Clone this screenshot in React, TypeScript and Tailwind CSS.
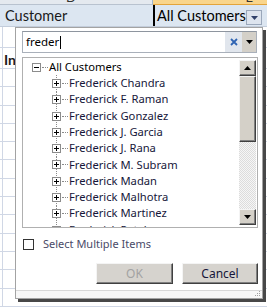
const names = [
  "Frederick Chandra",
  "Frederick F. Raman",
  "Frederick Gonzalez",
  "Frederick J. Garcia",
  "Frederick J. Rana",
  "Frederick M. Subram",
  "Frederick Madan",
  "Frederick Malhotra",
  "Frederick Martinez",
  "Frederick Patel",
];

function TreeBox({ plus }: { plus: boolean }) {
  return (
    <svg width="9" height="9" viewBox="0 0 9 9" className="shrink-0 block">
      <rect x="0.5" y="0.5" width="8" height="8" fill="#fff" stroke="#8c8c8c" />
      <line x1="2" y1="4.5" x2="7" y2="4.5" stroke="#000" />
      {plus && <line x1="4.5" y1="2" x2="4.5" y2="7" stroke="#000" />}
    </svg>
  );
}

function Tri({ up }: { up?: boolean }) {
  return (
    <svg width="7" height="4" viewBox="0 0 7 4" className="block">
      {up ? <polygon points="0,4 7,4 3.5,0" fill="#000" /> : <polygon points="0,0 7,0 3.5,4" fill="#000" />}
    </svg>
  );
}

export default function App() {
  const rowsBelow = Array.from({ length: 13 });
  return (
    <div className="relative w-[267px] h-[307px] overflow-hidden bg-white font-['Lato',sans-serif]">
      {/* Column header strip */}
      <div className="flex h-[5px] overflow-hidden">
        <div className="w-[153px] bg-[#e4e9ef] border-b border-[#b8c2cf] border-r border-r-[#9eb6ce] flex justify-center">
          <span className="text-[13px] leading-[13px] mt-[-9px] ml-[-10px] text-[#333]">D</span>
        </div>
        <div className="flex-1 bg-[#f9d58c] border-b border-[#e3a43b] flex justify-end pr-[14px]">
          <span className="text-[13px] leading-[13px] mt-[-9px] text-[#333]">E</span>
        </div>
      </div>
      {/* Row with cells */}
      <div className="flex h-[22px] border-b border-[#c3cddb]">
        <div className="w-[153px] bg-[#dce6f1] pl-[5px] flex items-center text-[14.5px] text-[#1a1a1a]">Customer</div>
        <div className="flex-1 bg-[#dce6f1] border-l-2 border-black flex items-center pl-[2px] text-[14.5px] text-black">
          <span>All Customers</span>
          <div className="ml-auto mr-[5px] mt-[4px] w-[16px] h-[15px] bg-[#dde4ee] border border-[#9aa7ba] flex items-center justify-center">
            <svg width="7" height="4" viewBox="0 0 7 4"><polygon points="0,0 7,0 3.5,4" fill="#30406a" /></svg>
          </div>
        </div>
      </div>
      {/* Sheet grid below */}
      <div className="flex flex-col">
        <div className="h-[21px] flex border-b border-[#d0d7e5]">
          <div className="w-[3px] border-r border-[#d0d7e5]" />
        </div>
        <div className="h-[21px] flex border-b border-[#d0d7e5]">
          <div className="w-[3px] border-r border-[#d0d7e5]" />
          <span className="pl-[1px] font-bold text-[14px] leading-[21px] text-[#1a1a1a] mt-[1px]">In</span>
        </div>
        {rowsBelow.map((_, i) => (
          <div key={i} className="h-[18.3px] flex border-b border-[#d0d7e5]">
            <div className="w-[3px] border-r border-[#d0d7e5]" />
          </div>
        ))}
      </div>

      {/* Dropdown panel */}
      <div className="absolute left-[15px] top-[27px] w-[248px] h-[272px] bg-white border border-[#a3a3a3] shadow-[3px_3px_0_#484848] flex flex-col font-['Noto_Sans',sans-serif]">
        <div className="pt-[3px] pl-[6px] flex flex-col flex-1">
          {/* Search box */}
          <div className="h-[22px] w-[235px] flex border border-[#a9b0ba] border-t-[#8e959f]">
            <div className="flex-1 bg-white flex items-center pl-[3px] text-[11.5px] text-black">
              <span>freder</span>
              <span className="w-px h-[13px] bg-black ml-[1px]" />
            </div>
            <div className="w-[17px] bg-[#e1e6ed] flex items-center justify-center">
              <svg width="8" height="8" viewBox="0 0 8 8">
                <path d="M1 1 L7 7 M7 1 L1 7" stroke="#2f64b3" strokeWidth="1.8" />
              </svg>
            </div>
            <div className="w-[14px] bg-[#d4d0c8] flex items-center justify-center">
              <Tri />
            </div>
          </div>

          {/* List box */}
          <div className="mt-[4px] w-[236px] h-[171px] border border-[#b0b0b0] bg-white flex overflow-hidden">
            <div className="flex-1 pt-[1px] pl-[9px] overflow-hidden text-[11.2px] text-[#16163a]">
              <div className="h-[16.3px] flex items-center">
                <TreeBox plus={false} />
                <div className="w-[6px] border-t border-dotted border-[#8a8a8a] ml-[1px]" />
                <span className="ml-[1px] whitespace-nowrap text-black">All Customers</span>
              </div>
              {names.map((n) => (
                <div key={n} className="h-[16.3px] flex items-center pl-[20px]">
                  <div className="h-full w-[9px] flex items-center bg-[linear-gradient(#8a8a8a_50%,transparent_50%)] bg-[length:1px_2px] bg-repeat-y bg-[position:4px_0]">
                    <TreeBox plus />
                  </div>
                  <div className="w-[6px] border-t border-dotted border-[#8a8a8a] ml-[1px]" />
                  <span className="ml-[1px] whitespace-nowrap">{n}</span>
                </div>
              ))}
            </div>
            {/* Scrollbar */}
            <div className="w-[17px] my-[2px] mr-[1px] flex flex-col">
              <div className="h-[16px] bg-[#d4d0c8] border border-t-[#f4f4f4] border-l-[#f4f4f4] border-r-[#404040] border-b-[#404040] shadow-[inset_-1px_-1px_0_#808080] flex items-center justify-center">
                <Tri up />
              </div>
              <div className="h-[66px] bg-[#d4d0c8] border border-t-[#f4f4f4] border-l-[#f4f4f4] border-r-[#404040] border-b-[#404040] shadow-[inset_-1px_-1px_0_#808080]" />
              <div className="flex-1 bg-[repeating-conic-gradient(#dcdcdc_0_25%,#f6f6f6_0_50%)] bg-[length:2px_2px]" />
              <div className="h-[16px] bg-[#d4d0c8] border border-t-[#f4f4f4] border-l-[#f4f4f4] border-r-[#404040] border-b-[#404040] shadow-[inset_-1px_-1px_0_#808080] flex items-center justify-center">
                <Tri />
              </div>
            </div>
          </div>

          {/* Select multiple */}
          <div className="mt-[11px] h-[11px] flex items-center pl-[1px]">
            <div className="w-[11px] h-[11px] border-[1.5px] border-[#333] bg-white" />
            <span className="ml-[9px] text-[11px] text-[#4a4a68] whitespace-nowrap">Select Multiple Items</span>
          </div>

          {/* Buttons */}
          <div className="mt-[13px] flex justify-end gap-[9px] pr-[4px]">
            <div className="w-[77px] h-[21px] bg-[#d6d3ce] border border-t-[#f4f4f4] border-l-[#f4f4f4] border-r-[#404040] border-b-[#404040] shadow-[inset_-1px_-1px_0_#808080] flex items-center justify-center text-[12px] text-[#a2a2a2]">
              OK
            </div>
            <div className="w-[76px] h-[21px] bg-[#d6d3ce] border border-t-[#f4f4f4] border-l-[#f4f4f4] border-r-[#404040] border-b-[#404040] shadow-[inset_-1px_-1px_0_#808080] flex items-center justify-center text-[12px] text-[#16163a]">
              Cancel
            </div>
          </div>
        </div>
        {/* Status bar */}
        <div className="h-[8px] border-t border-[#d8d8d8] bg-[#f7f7f7] flex justify-end items-end pr-[1px] pb-[1px]">
          <svg width="6" height="6" viewBox="0 0 6 6">
            <rect x="4" y="0" width="1" height="1" fill="#a0a0a0" />
            <rect x="2" y="2" width="1" height="1" fill="#a0a0a0" />
            <rect x="4" y="2" width="1" height="1" fill="#a0a0a0" />
            <rect x="0" y="4" width="1" height="1" fill="#a0a0a0" />
            <rect x="2" y="4" width="1" height="1" fill="#a0a0a0" />
            <rect x="4" y="4" width="1" height="1" fill="#a0a0a0" />
          </svg>
        </div>
      </div>
    </div>
  );
}
